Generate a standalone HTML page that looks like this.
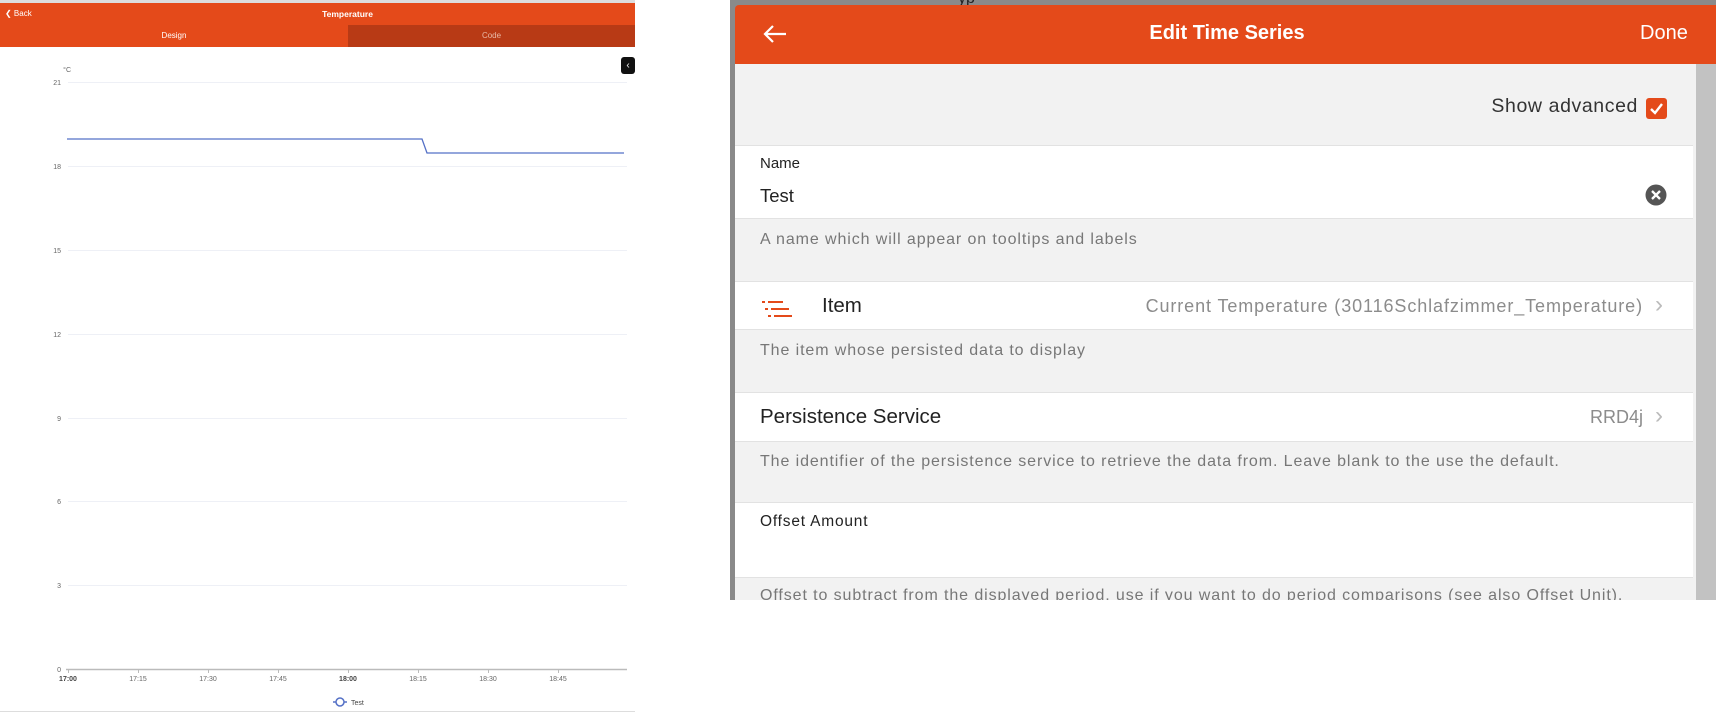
<!DOCTYPE html>
<html><head><meta charset="utf-8"><style>
*{margin:0;padding:0;box-sizing:border-box}
body{width:1716px;height:714px;background:#fff;position:relative;overflow:hidden;font-family:"Liberation Sans",sans-serif}
.a{position:absolute;white-space:nowrap}
.d{font-size:16px;color:#777;letter-spacing:0.9px}
</style></head><body>
<!-- left panel -->
<div class="a" style="left:0;top:0;width:635px;height:3px;background:#ddd"></div>
<div class="a" style="left:0;top:3px;width:635px;height:22px;background:#e44a1a"></div>
<div class="a" style="left:5px;top:9px;color:#fff;font-size:8px">&#10094; Back</div>
<div class="a" style="left:0;top:9px;width:695px;text-align:center;color:#fff;font-size:8.5px;font-weight:bold">Temperature</div>
<div class="a" style="left:0;top:25px;width:348px;height:22px;background:#e44a1a;color:#fff;font-size:8px;text-align:center;line-height:22px">Design</div>
<div class="a" style="left:348px;top:25px;width:287px;height:22px;background:#b83a15;color:#e8b8a6;font-size:8px;text-align:center;line-height:22px">Code</div>
<div class="a" style="left:621px;top:57px;width:14px;height:17px;background:#111;border-radius:3px;color:#fff;font-size:10px;text-align:center;line-height:17px">&#8249;</div>
<svg class="a" style="left:0;top:0" width="635" height="714">
<g stroke="#eef0f6" stroke-width="1">
<line x1="68" y1="82.5" x2="627" y2="82.5"/><line x1="68" y1="166.5" x2="627" y2="166.5"/><line x1="68" y1="250.5" x2="627" y2="250.5"/><line x1="68" y1="334.5" x2="627" y2="334.5"/><line x1="68" y1="418.5" x2="627" y2="418.5"/><line x1="68" y1="501.5" x2="627" y2="501.5"/><line x1="68" y1="585.5" x2="627" y2="585.5"/>
</g>
<line x1="66" y1="669.5" x2="627" y2="669.5" stroke="#bbb" stroke-width="1.5"/>
<g stroke="#bbb"><line x1="68.5" y1="669" x2="68.5" y2="673"/><line x1="138.5" y1="669" x2="138.5" y2="673"/><line x1="208.5" y1="669" x2="208.5" y2="673"/><line x1="278.5" y1="669" x2="278.5" y2="673"/><line x1="348.5" y1="669" x2="348.5" y2="673"/><line x1="418.5" y1="669" x2="418.5" y2="673"/><line x1="488.5" y1="669" x2="488.5" y2="673"/><line x1="558.5" y1="669" x2="558.5" y2="673"/></g>
<polyline points="67,139 422,139 427,153 624,153" fill="none" stroke="#5470c6" stroke-width="1.3"/>
<g font-family="Liberation Sans" font-size="7" fill="#666" text-anchor="end">
<text x="71" y="72">°C</text>
<text x="61" y="85">21</text><text x="61" y="169">18</text><text x="61" y="253">15</text><text x="61" y="337">12</text><text x="61" y="421">9</text><text x="61" y="504">6</text><text x="61" y="588">3</text><text x="61" y="672">0</text>
</g>
<g font-family="Liberation Sans" font-size="7" fill="#666" text-anchor="middle">
<text x="68" y="681" font-weight="bold" fill="#444">17:00</text><text x="138" y="681">17:15</text><text x="208" y="681">17:30</text><text x="278" y="681">17:45</text><text x="348" y="681" font-weight="bold" fill="#444">18:00</text><text x="418" y="681">18:15</text><text x="488" y="681">18:30</text><text x="558" y="681">18:45</text>
</g>
<line x1="333" y1="702" x2="347" y2="702" stroke="#5470c6" stroke-width="1.5"/>
<circle cx="340" cy="702" r="4" fill="#fff" stroke="#5470c6" stroke-width="1.5"/>
<text x="351" y="705" font-family="Liberation Sans" font-size="7" fill="#444">Test</text>
<line x1="0" y1="711.5" x2="635" y2="711.5" stroke="#ddd"/>
</svg>

<!-- right panel -->
<div class="a" style="left:730px;top:0;width:986px;height:600px;background:#8a8a8a"></div>
<div class="a" style="left:958px;top:-10px;font-size:16px;color:#222">yp</div>
<div class="a" style="left:735px;top:5px;width:981px;height:59px;background:#e44a1a;border-top-left-radius:4px"></div>
<svg class="a" style="left:762px;top:24px" width="26" height="20"><path d="M24 10H3M11 2L3 10l8 8" fill="none" stroke="#fff" stroke-width="2.2"/></svg>
<div class="a" style="left:1087px;top:22px;width:280px;text-align:center;color:#fff;font-size:20px;font-weight:bold">Edit Time Series</div>
<div class="a" style="left:1640px;top:22px;color:#fff;font-size:20px">Done</div>
<div class="a" style="left:735px;top:64px;width:961px;height:536px;background:#f2f2f2"></div>
<div class="a" style="left:1696px;top:64px;width:20px;height:536px;background:#c2c2c2"></div>
<div class="a" style="right:78px;top:95px;font-size:19.5px;color:#333;letter-spacing:0.6px">Show advanced</div>
<div class="a" style="left:1646px;top:98px;width:21px;height:21px;background:#e44a1a;border-radius:3px"></div>
<svg class="a" style="left:1646px;top:98px" width="21" height="21"><path d="M5 11l4 4 7-9" fill="none" stroke="#fff" stroke-width="2.4"/></svg>
<!-- name -->
<div class="a" style="left:735px;top:145px;width:958px;height:74px;background:#fff;border-top:1px solid #e2e2e2;border-bottom:1px solid #e2e2e2"></div>
<div class="a" style="left:760px;top:155px;font-size:15px;color:#222">Name</div>
<div class="a" style="left:760px;top:185px;font-size:18.5px;color:#222">Test</div>
<svg class="a" style="left:1645px;top:184px" width="22" height="22"><circle cx="11" cy="11" r="10.5" fill="#555"/><path d="M7 7l8 8M15 7l-8 8" stroke="#fff" stroke-width="2.3"/></svg>
<div class="a d" style="left:760px;top:231px">A name which will appear on tooltips and labels</div>
<!-- item -->
<div class="a" style="left:735px;top:281px;width:958px;height:49px;background:#fff;border-top:1px solid #e2e2e2;border-bottom:1px solid #e2e2e2"></div>
<svg class="a" style="left:762px;top:299px" width="32" height="20"><g fill="#e44a1a"><rect x="0" y="2" width="3" height="2"/><rect x="6" y="2" width="15" height="2"/><rect x="3" y="9" width="3" height="2"/><rect x="9" y="9" width="18" height="2"/><rect x="6" y="16" width="3" height="2"/><rect x="12" y="16" width="18" height="2"/></g></svg>
<div class="a" style="left:822px;top:294px;font-size:20.5px;color:#222">Item</div>
<div class="a" style="right:73px;top:296px;font-size:18px;color:#8c8c8c;letter-spacing:0.9px">Current Temperature (30116Schlafzimmer_Temperature)</div>
<div class="a" style="left:1655px;top:291px;font-size:24px;color:#bbb">&#8250;</div>
<div class="a d" style="left:760px;top:342px">The item whose persisted data to display</div>
<!-- persistence -->
<div class="a" style="left:735px;top:392px;width:958px;height:50px;background:#fff;border-top:1px solid #e2e2e2;border-bottom:1px solid #e2e2e2"></div>
<div class="a" style="left:760px;top:405px;font-size:20.5px;color:#222">Persistence Service</div>
<div class="a" style="right:73px;top:407px;font-size:18px;color:#8c8c8c">RRD4j</div>
<div class="a" style="left:1655px;top:402px;font-size:24px;color:#bbb">&#8250;</div>
<div class="a d" style="left:760px;top:453px">The identifier of the persistence service to retrieve the data from. Leave blank to the use the default.</div>
<!-- offset -->
<div class="a" style="left:735px;top:502px;width:958px;height:76px;background:#fff;border-top:1px solid #e2e2e2;border-bottom:1px solid #e2e2e2"></div>
<div class="a" style="left:760px;top:513px;font-size:15.5px;color:#222;letter-spacing:0.8px">Offset Amount</div>
<div class="a" style="left:735px;top:578px;width:961px;height:22px;overflow:hidden"><div class="a d" style="left:25px;top:9px">Offset to subtract from the displayed period, use if you want to do period comparisons (see also Offset Unit).</div></div>
</body></html>
